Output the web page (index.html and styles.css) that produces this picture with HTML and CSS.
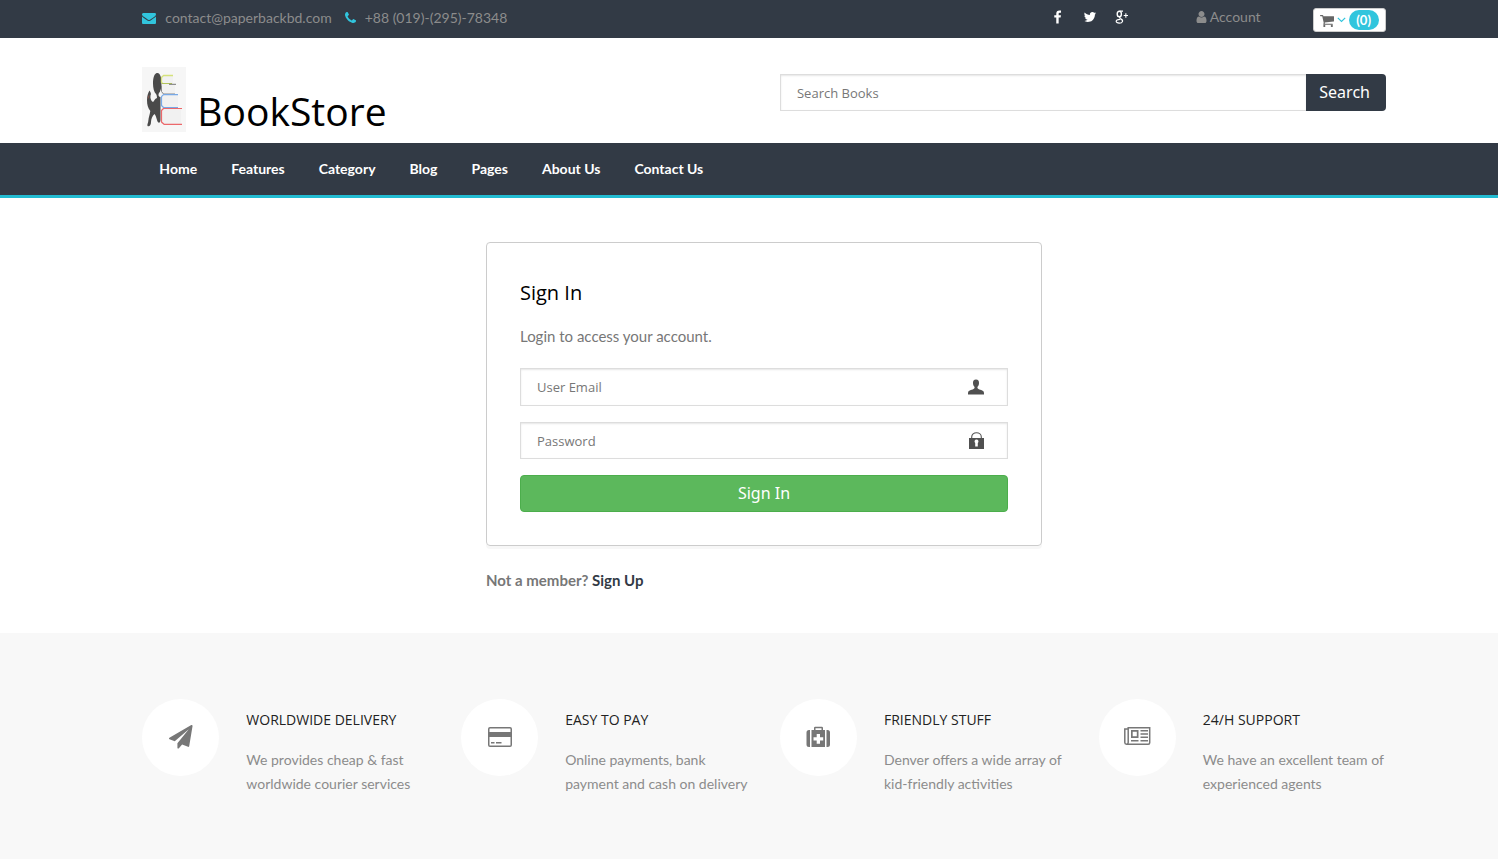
FILE: index.html
```html
<!DOCTYPE html>
<html lang="en">
<head>
<meta charset="utf-8">
<meta name="viewport" content="width=device-width, initial-scale=1">
<title>BookStore - Sign In</title>
<link rel="stylesheet" href="styles.css">
</head>
<body>
<div class="topbar">
  <div class="container topbar-row">
    <div class="contact">
      <a class="contact-item" href="#mail"><svg class="fa cyan" viewBox="0 0 1792 1792" aria-hidden="true"><path d="M1792 710v794q0 66-47 113t-113 47h-1472q-66 0-113-47t-47-113v-794q44 49 101 87 362 246 497 345 57 42 92.500 65.500t94.500 48 110 24.500h2q51 0 110-24.500t94.500-48 92.500-65.500q170-123 498-345 57-39 100-87zm0-294q0 79-49 151t-122 123q-376 261-468 325-10 7-42.500 30.500t-54 38-52 32.500-57.500 27-50 9h-2q-23 0-50-9t-57.500-27-52-32.500-54-38-42.500-30.500q-91-64-262-182.500t-205-142.500q-62-42-117-115.500t-55-136.500q0-78 41.500-130t118.500-52h1472q65 0 112.500 47t47.500 113z"/></svg>contact@paperbackbd.com</a>
      <a class="contact-item" href="#phone"><svg class="fa cyan phone" viewBox="192 0 1408 1792" aria-hidden="true"><path d="M1600 1240q0 27-10 70.500t-21 68.500q-21 50-122 106-94 51-186 51-27 0-53-3.500t-57.500-12.500-47-14.500-55.500-20.500-49-18q-98-35-175-83-127-79-264-216t-216-264q-48-77-83-175-3-9-18-49t-20.500-55.500-14.500-47-12.500-57.500-3.500-53q0-92 51-186 56-101 106-122 25-11 68.500-21t70.500-10q14 0 21 3 18 6 53 76 11 19 30 54t35 63.500 31 53.500q3 4 17.500 25t21.500 35.500 7 28.500q0 20-28.500 50t-62 55-62 53-28.500 46q0 9 5 22.500t8.500 20.500 14 24 11.500 19q76 137 174 235t235 174q2 1 19 11.500t24 14 20.500 8.500 22.500 5q18 0 46-28.500t53-62 55-62 50-28.500q14 0 28.500 7t35.500 21.500 25 17.500q25 15 53.500 31t63.500 35 54 30q70 35 76 53 3 7 3 21z"/></svg>+88 (019)-(295)-78348</a>
    </div>
    <div class="top-right">
      <div class="social">
        <a href="#facebook" aria-label="Facebook"><svg class="fa" viewBox="0 0 1792 1792"><path d="M1343 12v264h-157q-86 0-116 36t-30 108v189h293l-39 296h-254v759h-306v-759h-255v-296h255v-218q0-186 104-288.500t277-102.500q147 0 228 12z" transform="translate(-60 64)"/></svg></a>
        <a href="#twitter" aria-label="Twitter"><svg class="fa" viewBox="0 0 1792 1792"><path d="M1684 408q-67 98-162 167 1 14 1 42 0 130-38 259.500t-115.500 248.500-184.500 210.500-258 146-323 54.500q-271 0-496-145 35 4 78 4 225 0 401-138-105-2-188-64.500t-114-159.500q33 5 61 5 43 0 85-11-112-23-185.500-111.500t-73.500-205.500v-4q68 38 146 41-66-44-105-115t-39-154q0-88 44-163 121 149 294.500 238.500t371.500 99.500q-8-38-8-74 0-134 94.500-228.500t228.500-94.500q140 0 236 102 109-21 205-78-37 115-142 178 93-10 186-50z"/></svg></a>
        <a href="#google" aria-label="Google Plus"><svg class="fa" viewBox="0 0 14 14"><g fill="none" stroke="currentColor"><ellipse cx="4.300" cy="4" rx="2.100" ry="2.800" stroke-width="1.400"/><path d="M4.600 1.100H8M5.600 6.500c-1.500 1-1.200 1.600.2 2.400 3 1.500 1.900 4.300-1.500 4.300-4 0-4.500-3.700.7-3.900" stroke-width="1.200"/><path d="M8.700 5.500H13M10.850 3.300v4.400" stroke-width="1.100"/></g></svg></a>
      </div>
      <a class="account" href="#account"><svg class="fa user" viewBox="192 0 1408 1792" aria-hidden="true"><path transform="translate(64 0)" d="M1536 1399q0 109-62.500 187t-150.500 78h-854q-88 0-150.500-78t-62.500-187q0-85 8.500-160.500t31.500-152 58.500-131 94-89 134.500-34.500q131 128 313 128t313-128q76 0 134.500 34.500t94 89 58.500 131 31.500 152 8.500 160.500zm-256-887q0 159-112.500 271.500t-271.500 112.500-271.500-112.500-112.500-271.500 112.500-271.500 271.500-112.500 271.500 112.500 112.500 271.500z"/></svg>Account</a>
      <button class="cart" type="button" aria-label="Shopping cart">
        <svg class="cart-icon" viewBox="64 128 1664 1536" aria-hidden="true"><path d="M704 1536q0 52-38 90t-90 38-90-38-38-90 38-90 90-38 90 38 38 90zm896 0q0 52-38 90t-90 38-90-38-38-90 38-90 90-38 90 38 38 90zm128-1088v512q0 24-16.500 42.500t-40.500 21.500l-1044 122q13 60 13 70 0 16-24 64h920q26 0 45 19t19 45-19 45-45 19h-1024q-26 0-45-19t-19-45q0-11 8-31.500t16-36 21.500-40 15.500-29.500l-177-823h-204q-26 0-45-19t-19-45 19-45 45-19h256q16 0 28.500 6.500t19.500 15.500 13 24.500 8 26 5.500 29.500 4.500 26h1201q26 0 45 19t19 45z"/></svg>
        <svg class="chevron" viewBox="0 0 9 6" aria-hidden="true"><path d="M.8.800 4.500 4.500 8.200.8" fill="none" stroke="currentColor" stroke-width="1.200"/></svg>
        <span class="count">(0)</span>
      </button>
    </div>
  </div>
</div>

<header class="container masthead">
  <a class="brand" href="#home">
    <svg class="logo" viewBox="0 0 44 65" aria-hidden="true">
      <rect width="44" height="65" fill="#f6f6f6"/>
      <g fill="#f1f1f1"><path d="M19 9h12v8H19zM19 17h14v10H19zM19 28h17v12H19zM19 42h20v15H19z"/></g>
      <path fill="#4a4a4a" d="M15 6c3-.5 4.500 4 4.500 10 0 5-1 8.500-2.800 10.500-.7 2 .3 3.500 1.800 3.500V53c0 3-2.500 4-3.500 0-.8-3-1.500-5-2.500-6-2 1.500-3.500 5-3.500 8 0 3-1.500 5-3.500 4-.5-2 .8-3 .8-5 .3-4 1.700-7 2-10C6 41 5 38 5 33c0-4 1-7 2.500-9.500 1 2 2 3 1 5C8 31 9 34 11 35c1.700-1.500 1.500-3 4-4 0-1.500-.3-3-1-4-2-2-3-6-3-10.500C11 10 12.500 6.500 15 6z"/>
      <path d="M6 31.500l1-3" stroke="#9a5549" stroke-width=".8"/>
      <g fill="none" stroke-linejoin="round">
        <path d="M31 8.500H21.500l-2 2v5l1.500 1" stroke="#d5e27c" stroke-width="1.300"/>
        <path d="M20 16.500h10" stroke="#b2c35a"/><path d="M27 17.300h7" stroke="#777"/>
        <path d="M19.500 18.500v6l2 2.500H33" stroke="#888"/>
        <path d="M36 27.700H21.500l-2 2V38.500l2 2H36" stroke="#78a9e6" stroke-width="1.200"/>
        <path d="M40 41.500H21.500l-2 2V55l2.500 2.300h18" stroke="#ec686b" stroke-width="1.200"/>
      </g>
    </svg>
    <span class="brand-name">BookStore</span>
  </a>
  <form class="search">
    <input class="field search-field" type="search" placeholder="Search Books" aria-label="Search Books">
    <button class="search-button" type="button">Search</button>
  </form>
</header>

<nav class="mainnav" aria-label="Main">
  <ul class="container nav-list">
    <li><a href="#home">Home</a></li>
    <li><a href="#features">Features</a></li>
    <li><a href="#category">Category</a></li>
    <li><a href="#blog">Blog</a></li>
    <li><a href="#pages">Pages</a></li>
    <li><a href="#about">About Us</a></li>
    <li><a href="#contact">Contact Us</a></li>
  </ul>
</nav>

<main class="container">
  <div class="signin">
    <form class="card">
      <h1>Sign In</h1>
      <p class="intro">Login to access your account.</p>
      <div class="input-wrap">
        <input class="field" type="email" placeholder="User Email" aria-label="User Email">
        <svg class="field-icon" viewBox="0 0 16 16" aria-hidden="true"><path fill="#505050" d="M8 0.500C5.800.500 4.800 2 5 4.200c.1 1.800.7 3 1.600 3.800 0 1.400-.5 2-2 2.400C2 11.100 0 11.600 0 14v1.500h16V14c0-2.400-2-2.900-4.600-3.600-1.500-.4-2-1-2-2.400.9-.8 1.500-2 1.600-3.800C11.200 2 10.200.5 8 .5z"/></svg>
      </div>
      <div class="input-wrap">
        <input class="field" type="password" placeholder="Password" aria-label="Password">
        <svg class="field-icon lock" viewBox="0 0 15 17" aria-hidden="true"><path d="M2.700 6.500V5a4.800 4.300 0 0 1 9.600 0v1.500" fill="none" stroke="#555" stroke-width="1.100"/><path fill="#505050" fill-rule="evenodd" d="M0 6h15v11H0zM7.500 7.500a2 2 0 0 0-1.300 3.500v3.500h2.600V11a2 2 0 0 0-1.300-3.500z"/></svg>
      </div>
      <button class="submit" type="button">Sign In</button>
    </form>
    <p class="member">Not a member? <a href="#signup">Sign Up</a></p>
  </div>
</main>

<section class="services">
  <div class="container service-grid">
    <article class="service">
      <div class="circle"><svg class="service-icon" viewBox="0 0 24 24" aria-hidden="true"><path transform="scale(.01315)" d="M1764 11q33 24 27 64l-256 1536q-5 29-32 45-14 8-31 8-11 0-24-5l-453-185-242 295q-18 23-49 23-13 0-22-4-19-7-30.500-23.500t-11.500-36.500v-349l864-1059-1069 925-395-162q-37-14-40-55-2-40 32-59l1664-960q15-9 32-9 20 0 36 11z"/></svg></div>
      <div class="service-text"><h2>WORLDWIDE DELIVERY</h2><p>We provides cheap &amp; fast worldwide courier services</p></div>
    </article>
    <article class="service">
      <div class="circle"><svg class="service-icon wide" viewBox="0 0 26 24" aria-hidden="true"><path fill-rule="evenodd" d="M3 2h20a2 2 0 0 1 2 2v16a2 2 0 0 1-2 2H3a2 2 0 0 1-2-2V4a2 2 0 0 1 2-2zm0 1.500a.5.500 0 0 0-.5.500v3h21V4a.5.500 0 0 0-.5-.5zM2.500 12v8a.5.500 0 0 0 .5.500h20a.5.500 0 0 0 .5-.5v-8zM4 17h3.500v1.500H4zm5 0h5.500v1.500H9z"/></svg></div>
      <div class="service-text"><h2>EASY TO PAY</h2><p>Online payments, bank payment and cash on delivery</p></div>
    </article>
    <article class="service">
      <div class="circle"><svg class="service-icon" viewBox="0 0 24 24" aria-hidden="true"><path fill-rule="evenodd" d="M5.500 5H8V3a1.200 1.200 0 0 1 1.200-1.200h6.600A1.200 1.200 0 0 1 17 3v2h2v17H5.500zm4-1.700V5h6V3.300zM10.700 9v3.200H7.500v3.300h3.200v3.200H14v-3.200h3.200v-3.300H14V9zM4 5v17H3a2.500 2.500 0 0 1-2.500-2.500v-12A2.500 2.500 0 0 1 3 5zM20.500 5h1A2.500 2.500 0 0 1 24 7.500v12a2.500 2.500 0 0 1-2.500 2.500h-1z"/></svg></div>
      <div class="service-text"><h2>FRIENDLY STUFF</h2><p>Denver offers a wide array of kid-friendly activities</p></div>
    </article>
    <article class="service">
      <div class="circle"><svg class="service-icon news" viewBox="0 0 28 24" aria-hidden="true"><path fill="none" stroke="currentColor" stroke-width="1.500" d="M5 4H1.800v13.500a1.700 1.700 0 0 0 3.400 0V2.800h21.500v15a1.500 1.500 0 0 1-1.500 1.500H3.500"/><path fill-rule="evenodd" d="M8 5h7.500v8H8zm1.700 1.700v4.600h4.100V6.700zM17.500 5H25v1.500h-7.500zm0 3.300H25v1.500h-7.500zm0 3.300H25v1.500h-7.500zM8 15h7.500v1.500H8zm9.500 0H25v1.500h-7.500z"/></svg></div>
      <div class="service-text"><h2>24/H SUPPORT</h2><p>We have an excellent team of experienced agents</p></div>
    </article>
  </div>
</section>
</body>
</html>
```
FILE: styles.css
```css
* { box-sizing: border-box; }

body {
  margin: 0;
  min-height: 100vh;
  display: flex;
  flex-direction: column;
  background: #fff;
  color: #777;
  font-family: Lato, sans-serif;
  font-size: 15px;
  line-height: 24px;
}

a { color: inherit; text-decoration: none; }
h1, h2, p, ul { margin: 0; padding: 0; }
svg { display: block; flex: none; fill: currentColor; }

.container {
  width: 85%;
  margin: 0 auto;
  padding-left: 30px;
}

/* Top bar */
.topbar { background: #323a45; color: #8c8c8c; }
.topbar-row {
  display: flex;
  justify-content: space-between;
  align-items: center;
  height: 38px;
}
.contact, .top-right, .social, .contact-item, .account { display: flex; align-items: center; }
.contact { gap: 13px; font-size: 14px; padding-bottom: 2px; }
.contact-item { gap: 9px; }
.fa { width: 14px; height: 14px; }
.cyan { color: #31c5dd; }
.phone { width: 11px; }
.social { gap: 18px; color: #fff; margin-right: 66px; padding-bottom: 4px; }
.account { gap: 3px; font-size: 14px; margin-right: 52px; padding-bottom: 4px; }
.user { width: 12px; }
.cart {
  display: flex;
  align-items: center;
  gap: 3px;
  height: 24px;
  margin-top: 2px;
  padding: 0 6px;
  border: 1px solid #ccc;
  border-radius: 3px;
  background: #fff;
  color: #666;
  font: bold 13px/20px Lato, sans-serif;
}
.cart-icon { width: 14px; height: 13px; }
.chevron { width: 9px; height: 6px; color: #31c5dd; }
.count {
  width: 30px;
  border-radius: 10px;
  background: #31c5dd;
  color: #fff;
  text-align: center;
}

/* Masthead */
.masthead {
  display: grid;
  grid-template-columns: 1fr 1fr;
  gap: 32px;
  height: 105px;
  padding-top: 29px;
}
.brand { display: flex; gap: 11px; align-items: flex-start; }
.logo { width: 44px; height: 65px; }
.brand-name {
  padding-top: 16px;
  color: #000;
  font: 39px/56px "Open Sans", sans-serif;
}
.search { display: flex; align-items: flex-start; padding-top: 7px; }
.field {
  display: block;
  width: 100%;
  height: 37px;
  margin: 0;
  padding: 0 16px;
  border: 1px solid #ddd;
  border-radius: 0;
  background: #fff;
  box-shadow: inset 0 1px 2px rgba(0, 0, 0, .1);
  color: #333;
  font: 13px/20px "Open Sans", sans-serif;
  appearance: none;
}
.field::placeholder { color: #777; opacity: 1; }
.search-field { flex: 1; min-width: 0; border-right: 0; }
.search-button {
  width: 80px;
  height: 37px;
  padding: 0 2px 2px 0;
  border: 0;
  border-radius: 0 4px 4px 0;
  background: #323a45;
  color: #fff;
  font: 16px/24px "Noto Sans", sans-serif;
}

/* Navigation */
.mainnav { background: #323a45; border-bottom: 3px solid #22bbd1; }
.nav-list {
  display: flex;
  flex-wrap: wrap;
  list-style: none;
  color: #fff;
  font-size: 14px;
  font-weight: bold;
}
.nav-list.container { padding-left: 30px; }
.nav-list a { display: block; padding: 14px 17px; }

/* Sign in */
.signin { max-width: 556px; margin: 0 auto; padding: 44px 0 41px; }
.card {
  padding: 32px 33px 33px;
  border: 1px solid #ccc;
  border-radius: 4px;
  box-shadow: 0 3px 0 rgba(12, 12, 12, .03);
}
.card h1 { color: #000; font: 20px/36px "Open Sans", sans-serif; }
.intro { padding: 13px 0 20px; }
.input-wrap { position: relative; margin-bottom: 16px; }
.input-wrap .field { height: 38px; }
.input-wrap + .input-wrap .field { height: 37px; }
.field-icon { position: absolute; top: 11px; right: 24px; width: 16px; height: 16px; }
.lock { top: 10px; width: 15px; height: 17px; }
.submit {
  display: block;
  width: 100%;
  height: 37px;
  padding: 0 0 2px;
  border: 1px solid #4cae4c;
  border-radius: 4px;
  background: #5cb85c;
  color: #fff;
  font: 16px/24px "Noto Sans", sans-serif;
}
.member { padding-top: 22px; font-weight: bold; }
.member a { color: #323a45; }

/* Services */
.services { flex: 1; padding: 66px 0 62px; background: #f8f8f8; }
.service-grid { display: grid; grid-template-columns: repeat(4, 1fr); gap: 32px; }
.service { display: flex; gap: 27px; }
.circle {
  display: flex;
  flex: none;
  align-items: center;
  justify-content: center;
  width: 77px;
  height: 77px;
  padding-bottom: 2px;
  border-radius: 50%;
  background: #fff;
}
.service-icon { width: 24px; height: 24px; }
.wide { width: 26px; }
.news { width: 28px; }
.service-text { font-size: 14px; color: #8c8c8c; }
.service-text h2 { padding: 9px 0 16px; color: #222; font: 14px/24px "Open Sans", sans-serif; }

@media (max-width: 1100px) {
  .service-grid { grid-template-columns: repeat(2, 1fr); }
}
```
